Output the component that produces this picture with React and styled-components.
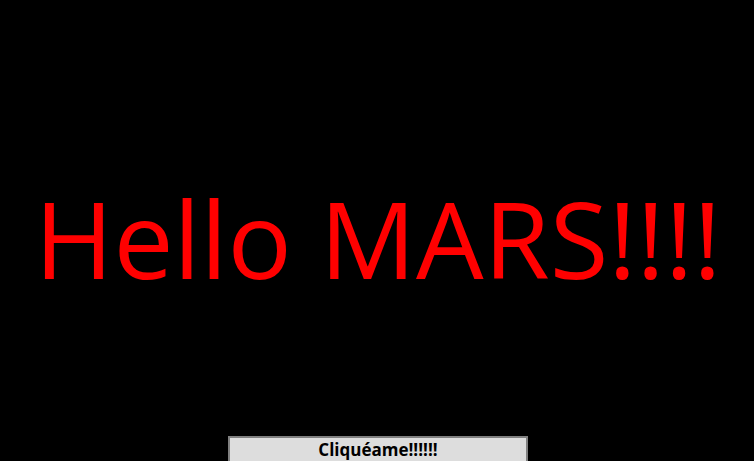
import React from "react";
import styled, { createGlobalStyle } from "styled-components";

const Global = createGlobalStyle`
  html, body { margin: 0; padding: 0; background: #000; }
  body { overflow: hidden; }
`;

const Page = styled.div`
  display: flex;
  flex-direction: column;
  align-items: center;
  width: 754px;
  height: 461px;
  background: #000;
  overflow: hidden;
`;

const Stage = styled.div`
  flex: none;
  box-sizing: border-box;
  height: 436px;
  width: 100%;
  padding-top: 38px;
  display: flex;
  align-items: center;
  justify-content: center;
`;

const Title = styled.h1`
  margin: 0;
  font-family: "Open Sans", "Noto Sans", sans-serif;
  font-weight: 400;
  font-size: 107px;
  line-height: 1;
  color: #ff0000;
  white-space: nowrap;
  transform: translateX(1px);
`;

const Button = styled.button`
  flex: none;
  width: 300px;
  height: 32px;
  padding: 0;
  margin: 0 0 0 2px;
  background: #dddddd;
  border: 2px solid #808080;
  box-sizing: border-box;
  font-family: "Open Sans", "Noto Sans", sans-serif;
  font-weight: 700;
  font-size: 17px;
  line-height: 24px;
  color: #000;
  display: flex;
  justify-content: center;
  align-items: flex-start;
`;

export default function App() {
  return (
    <Page>
      <Global />
      <Stage>
        <Title>Hello MARS!!!!</Title>
      </Stage>
      <Button>Cliquéame!!!!!!</Button>
    </Page>
  );
}
